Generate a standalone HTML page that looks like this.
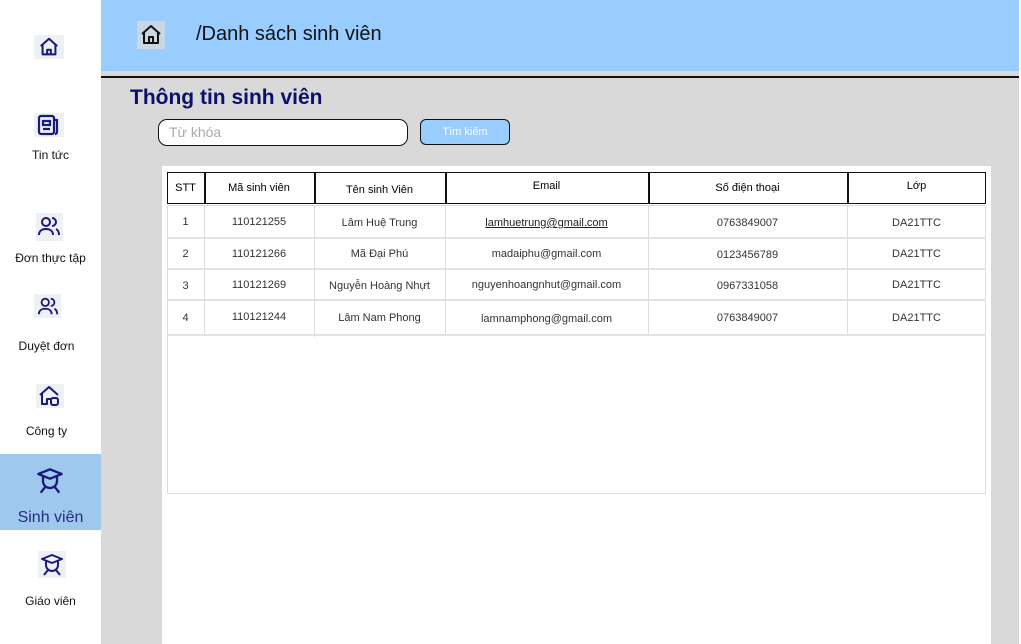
<!DOCTYPE html>
<html><head><meta charset="utf-8"><style>
*{margin:0;padding:0;box-sizing:border-box}
body{width:1021px;height:644px;position:relative;overflow:hidden;background:#fff;font-family:"Liberation Sans",sans-serif;color:#000}
.a{position:absolute}
.side{left:0;top:0;width:101px;height:644px;background:#fff}
.nav{position:absolute;left:0;width:101px;text-align:center;font-size:12px;color:#111}
.ic{position:absolute;background:#eef0f4}
.cell{position:absolute;display:flex;align-items:center;justify-content:center;font-size:11px;color:#333}
.hd{font-size:11px;color:#000}
</style></head><body>
<div class="a side"></div>
<div class="a" style="left:101px;top:0;width:920px;height:644px;background:#d9d9d9"></div>
<div class="a" style="left:101px;top:0;width:918px;height:71px;background:#99ccff"></div>
<div class="a" style="left:1019px;top:0;width:2px;height:644px;background:#fff"></div>
<div class="a" style="left:101px;top:76px;width:918px;height:1.5px;background:#111"></div>
<div class="a" style="left:137px;top:21px;width:28px;height:28px;background:#c9d6e3"></div>
<svg class="a" style="left:139px;top:23px" width="24" height="24" viewBox="0 0 24 24" fill="none" stroke="#111" stroke-width="2" stroke-linejoin="round"><path d="M3 11L12 3l9 8M5 9.5V20h14V9.5M10 20v-6h4v6"/></svg>
<div class="a" style="left:196px;top:23px;font-size:20px;color:#111">/Danh sách sinh viên</div>
<div class="a" style="left:130px;top:86px;font-size:21px;font-weight:bold;color:#0d0f6b">Thông tin sinh viên</div>
<div class="a" style="left:158px;top:119px;width:250px;height:27px;background:#fff;border:1px solid #111;border-radius:9px;padding-left:10px;font-size:14px;line-height:25px;color:#aaa">Từ khóa</div>
<div class="a" style="left:420px;top:119px;width:90px;height:26px;background:#99ccff;border:1px solid #111;border-radius:6px;font-size:11px;line-height:24px;text-align:center;color:#fff">Tìm kiếm</div>
<div class="a" style="left:162px;top:166px;width:829px;height:478px;background:#fff"></div>
<div class="a" style="left:167px;top:205px;width:819px;height:289px;border:1px solid #ddd"></div>
<div class="a" style="left:167px;top:172px;width:819px;height:32px;border:1.5px solid #111"></div>
<!-- header verticals -->
<div class="a" style="left:204px;top:172px;width:1.5px;height:32px;background:#111"></div>
<div class="a" style="left:314px;top:172px;width:1.5px;height:32px;background:#111"></div>
<div class="a" style="left:445px;top:172px;width:1.5px;height:32px;background:#111"></div>
<div class="a" style="left:648px;top:172px;width:1.5px;height:32px;background:#111"></div>
<div class="a" style="left:847px;top:172px;width:1.5px;height:32px;background:#111"></div>
<!-- body lines -->
<div class="a" style="left:167px;top:237px;width:819px;height:2px;background:#e3e3e3"></div>
<div class="a" style="left:167px;top:268px;width:819px;height:2px;background:#e3e3e3"></div>
<div class="a" style="left:167px;top:299px;width:819px;height:2px;background:#e3e3e3"></div>
<div class="a" style="left:167px;top:334px;width:819px;height:2px;background:#e3e3e3"></div>
<div class="a" style="left:204px;top:205px;width:1px;height:130px;background:#ddd"></div>
<div class="a" style="left:314px;top:205px;width:1px;height:132px;background:#ddd"></div>
<div class="a" style="left:445px;top:205px;width:1px;height:130px;background:#ddd"></div>
<div class="a" style="left:648px;top:205px;width:1px;height:130px;background:#ddd"></div>
<div class="a" style="left:847px;top:205px;width:1px;height:130px;background:#ddd"></div>

<div class="cell hd" style="left:167px;top:172px;width:37px;height:32px">STT</div>
<div class="cell hd" style="left:204px;top:172px;width:110px;height:32px">Mã sinh viên</div>
<div class="cell hd" style="left:314px;top:174px;width:131px;height:32px">Tên sinh Viên</div>
<div class="cell hd" style="left:445px;top:170px;width:203px;height:32px">Email</div>
<div class="cell hd" style="left:648px;top:172px;width:199px;height:32px">Số điện thoại</div>
<div class="cell hd" style="left:847px;top:170px;width:139px;height:32px">Lớp</div>

<div class="cell" style="left:167px;top:206px;width:37px;height:32px">1</div>
<div class="cell" style="left:204px;top:206px;width:110px;height:32px">110121255</div>
<div class="cell" style="left:314px;top:207px;width:131px;height:32px">Lâm Huệ Trung</div>
<div class="cell" style="left:445px;top:207px;width:203px;height:32px;text-decoration:underline;color:#222">lamhuetrung@gmail.com</div>
<div class="cell" style="left:648px;top:207px;width:199px;height:32px">0763849007</div>
<div class="cell" style="left:847px;top:207px;width:139px;height:32px">DA21TTC</div>

<div class="cell" style="left:167px;top:238px;width:37px;height:31px">2</div>
<div class="cell" style="left:204px;top:238px;width:110px;height:31px">110121266</div>
<div class="cell" style="left:314px;top:238px;width:131px;height:31px">Mã Đại Phú</div>
<div class="cell" style="left:445px;top:238px;width:203px;height:31px">madaiphu@gmail.com</div>
<div class="cell" style="left:648px;top:239px;width:199px;height:31px">0123456789</div>
<div class="cell" style="left:847px;top:238px;width:139px;height:31px">DA21TTC</div>

<div class="cell" style="left:167px;top:270px;width:37px;height:31px">3</div>
<div class="cell" style="left:204px;top:269px;width:110px;height:31px">110121269</div>
<div class="cell" style="left:314px;top:270px;width:131px;height:31px">Nguyễn Hoàng Nhựt</div>
<div class="cell" style="left:445px;top:269px;width:203px;height:31px">nguyenhoangnhut@gmail.com</div>
<div class="cell" style="left:648px;top:270px;width:199px;height:31px">0967331058</div>
<div class="cell" style="left:847px;top:269px;width:139px;height:31px">DA21TTC</div>

<div class="cell" style="left:167px;top:301px;width:37px;height:34px">4</div>
<div class="cell" style="left:204px;top:300px;width:110px;height:34px">110121244</div>
<div class="cell" style="left:314px;top:301px;width:131px;height:34px">Lâm Nam Phong</div>
<div class="cell" style="left:445px;top:302px;width:203px;height:34px">lamnamphong@gmail.com</div>
<div class="cell" style="left:648px;top:301px;width:199px;height:34px">0763849007</div>
<div class="cell" style="left:847px;top:301px;width:139px;height:34px">DA21TTC</div>

<!-- sidebar -->
<div class="ic" style="left:34px;top:35px;width:30px;height:24px"></div>
<svg class="a" style="left:38px;top:36px" width="22" height="22" viewBox="0 0 24 24" fill="none" stroke="#1a1a7a" stroke-width="2.2" stroke-linejoin="round"><path d="M3 11L12 3l9 8M5 9.5V20h14V9.5M10 20v-5h4v5"/></svg>

<div class="ic" style="left:34px;top:113px;width:30px;height:24px"></div>
<svg class="a" style="left:37px;top:114px" width="24" height="22" viewBox="0 0 24 22" fill="none" stroke="#1a1a7a" stroke-width="2.2"><rect x="2" y="2" width="15" height="18" rx="2"/><path d="M17 6h3v12a2 2 0 0 1-2 2M6 7h7v4H6zM6 15h7"/></svg>
<div class="nav" style="top:148px">Tin tức</div>

<div class="ic" style="left:36px;top:213px;width:27px;height:28px"></div>
<svg class="a" style="left:37px;top:214px" width="24" height="24" viewBox="0 0 24 24" fill="none" stroke="#1a1a7a" stroke-width="2"><circle cx="9" cy="8" r="4"/><path d="M2 21c0-4 3-6 7-6s7 2 7 6M15 4a4 4 0 0 1 0 8M19 15c2 1 3 3 3 6"/></svg>
<div class="nav" style="top:251px">Đơn thực tập</div>

<div class="ic" style="left:34px;top:294px;width:27px;height:24px"></div>
<svg class="a" style="left:36px;top:295px" width="24" height="22" viewBox="0 0 24 24" fill="none" stroke="#1a1a7a" stroke-width="2"><circle cx="9" cy="8" r="4"/><path d="M2 21c0-4 3-6 7-6s7 2 7 6M15 4a4 4 0 0 1 0 8M19 15c2 1 3 3 3 6"/></svg>
<div class="nav" style="top:339px;left:-4px">Duyệt đơn</div>

<div class="ic" style="left:36px;top:384px;width:28px;height:24px"></div>
<svg class="a" style="left:37px;top:384px" width="24" height="24" viewBox="0 0 24 24" fill="none" stroke="#1a1a7a" stroke-width="2" stroke-linejoin="round"><path d="M3 11l9-8 9 8M5 9v11h5v-5h4"/><rect x="14" y="14" width="7" height="7" rx="2"/></svg>
<div class="nav" style="top:424px;left:-4px">Công ty</div>

<div class="a" style="left:0;top:454px;width:101px;height:76px;background:#9fc8ee"></div>
<svg class="a" style="left:36px;top:467px" width="28" height="28" viewBox="0 0 24 24" fill="none" stroke="#1a1a7a" stroke-width="2" stroke-linejoin="round"><path d="M2 6l10-4 10 4-10 4zM6 8v4a6 6 0 0 0 12 0V8M4 22l4-5M20 22l-4-5"/></svg>
<div class="nav" style="top:509px;font-size:16px;color:#2a2a80">Sinh viên</div>

<div class="ic" style="left:38px;top:551px;width:28px;height:27px"></div>
<svg class="a" style="left:40px;top:553px" width="24" height="24" viewBox="0 0 24 24" fill="none" stroke="#1a1a7a" stroke-width="2" stroke-linejoin="round"><path d="M2 6l10-4 10 4-10 4zM6 8v4a6 6 0 0 0 12 0V8M4 22l4-5M20 22l-4-5"/></svg>
<div class="nav" style="top:594px">Giáo viên</div>
</body></html>
